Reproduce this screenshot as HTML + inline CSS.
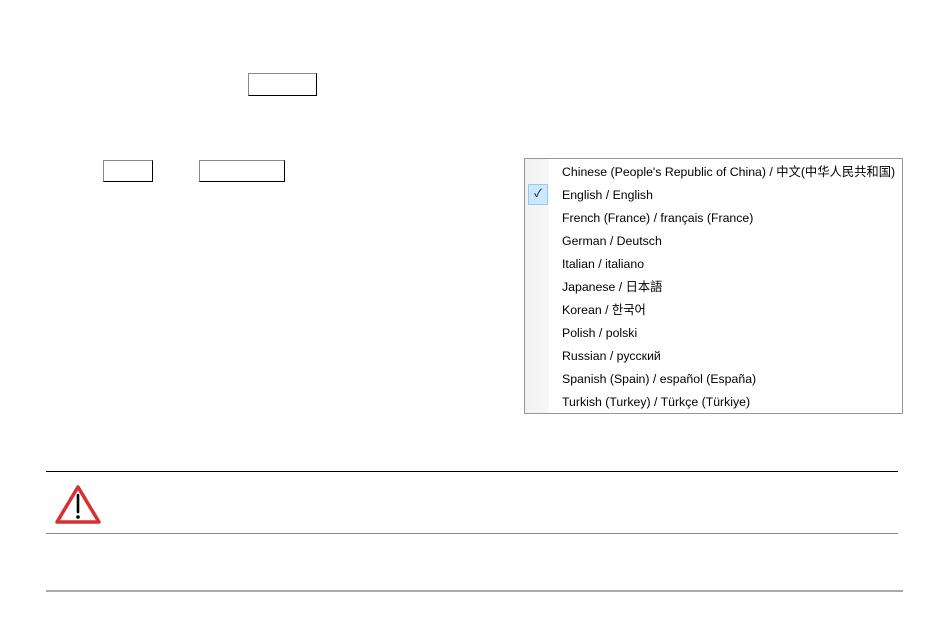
<!DOCTYPE html>
<html><head><meta charset="utf-8"><style>
body{margin:0;width:950px;height:638px;background:#fff;position:relative;overflow:hidden;font-family:"Liberation Sans","Noto Sans CJK SC",sans-serif}
.b{position:absolute;border:1px solid #000;border-left-color:#888;border-top-color:#888;box-sizing:border-box}
.menu{position:absolute;left:524px;top:158px;width:379px;height:256px;border:1px solid #979797;box-sizing:border-box;background:#fff}
.gut{position:absolute;left:0;top:0;width:24px;height:100%;background:linear-gradient(90deg,#f1f1f1,#f8f8f8)}
.it{position:absolute;left:37px;font-size:12.3px;line-height:16px;height:16px;color:#000;white-space:nowrap;letter-spacing:0}
.chk{position:absolute;left:3px;top:25px;width:20px;height:21px;background:#cce8ff;border:1px solid #99c9ef;box-sizing:border-box;font-size:11px;text-align:center;line-height:19px}
.ln{position:absolute;height:1px}
</style></head><body>
<div class="b" style="left:248px;top:73px;width:69px;height:23px"></div>
<div class="b" style="left:103px;top:160px;width:50px;height:22px"></div>
<div class="b" style="left:199px;top:160px;width:86px;height:22px"></div>
<div class="menu"><div class="gut"></div><div class="chk">✓</div>
<div class="it" style="top:5px">Chinese (People's Republic of China) / 中文(中华人民共和国)</div>
<div class="it" style="top:28px">English / English</div>
<div class="it" style="top:51px">French (France) / français (France)</div>
<div class="it" style="top:74px">German / Deutsch</div>
<div class="it" style="top:97px">Italian / italiano</div>
<div class="it" style="top:120px">Japanese / 日本語</div>
<div class="it" style="top:143px">Korean / 한국어</div>
<div class="it" style="top:166px">Polish / polski</div>
<div class="it" style="top:189px">Russian / русский</div>
<div class="it" style="top:212px">Spanish (Spain) / español (España)</div>
<div class="it" style="top:235px">Turkish (Turkey) / Türkçe (Türkiye)</div>
</div>
<div class="ln" style="left:46px;top:471px;width:852px;background:#000"></div>
<div class="ln" style="left:46px;top:533px;width:852px;background:#888"></div>
<div class="ln" style="left:46px;top:590px;width:857px;height:2px;background:#aaa"></div>
<svg style="position:absolute;left:54px;top:483px" width="48" height="42" viewBox="0 0 48 42">
<path d="M24 4 L45 39 L3 39 Z" fill="#fff" stroke="#d83030" stroke-width="3.5" stroke-linejoin="round"/>
<path d="M24 12 L24 29" stroke="#000" stroke-width="2.6" stroke-linecap="round"/>
<circle cx="24" cy="34" r="1.8" fill="#000"/>
</svg>
</body></html>
